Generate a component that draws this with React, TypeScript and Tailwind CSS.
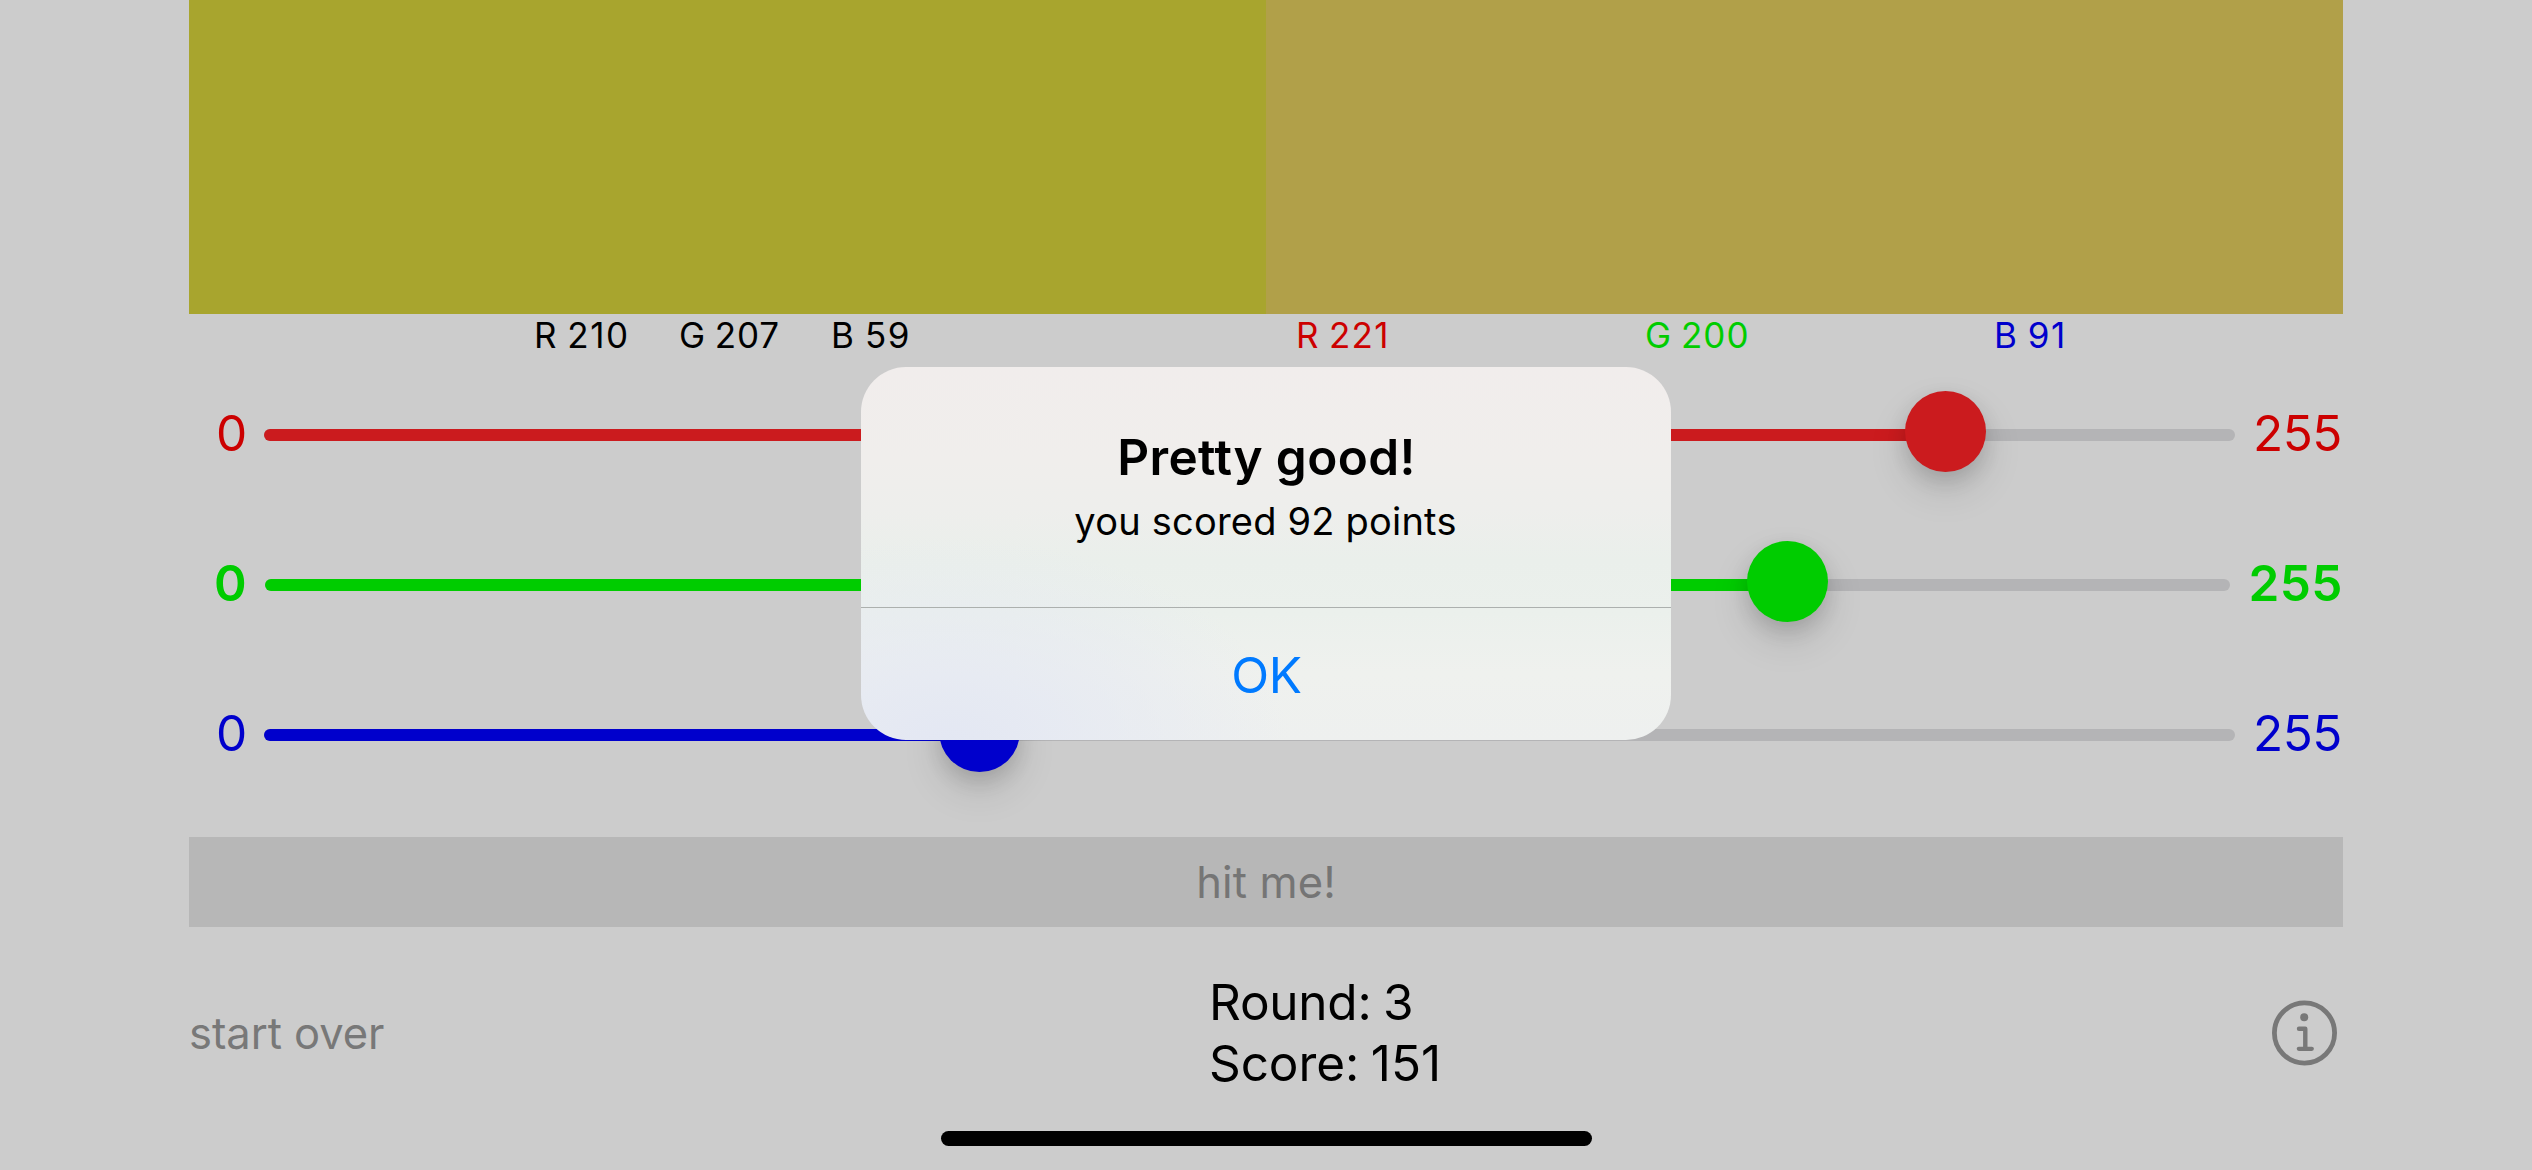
type SliderProps = {
  row: string;
  zero: string;
  track: string;
  fill: string;
  knob: string;
  max: string;
};

function ColorSlider({ row, zero, track, fill, knob, max }: SliderProps) {
  return (
    <div className={`flex h-[150px] items-center text-[49.5px] leading-[60px] ${row}`}>
      <span className={zero}>0</span>
      <div className={`relative mt-1 h-3 shrink-0 rounded-full bg-[#b4b4b6] ${track}`}>
        <div className={`h-3 rounded-full ${fill}`} />
        <div
          className={`absolute -top-[38px] size-[81px] rounded-full shadow-[0_18px_39px_rgba(0,0,0,0.13),0_8px_20px_rgba(0,0,0,0.12)] ${knob}`}
        />
      </div>
      <span className={max}>255</span>
    </div>
  );
}

function InfoIcon() {
  return (
    <svg
      viewBox="0 0 66 66"
      className="ml-auto mr-[5px] size-[66px]"
      fill="none"
      stroke="#787878"
      strokeLinecap="round"
      strokeLinejoin="round"
    >
      <circle cx="32.5" cy="33" r="30.1" strokeWidth="4.8" />
      <circle cx="32.2" cy="17.3" r="4" fill="#787878" stroke="none" />
      <path d="M27 28.8h6.3v20" strokeWidth="4.4" />
      <path d="M26.8 48.8h13" strokeWidth="4.2" />
    </svg>
  );
}

function Alert() {
  return (
    <div className="absolute left-[861px] top-[367px] flex h-[373px] w-[810px] flex-col overflow-hidden rounded-[45px] bg-[radial-gradient(ellipse_340px_210px_at_11%_102%,#e3e7f3_0%,rgba(229,233,243,0.8)_35%,rgba(233,237,240,0)_100%),linear-gradient(180deg,#f1edec_0%,#f0eeec_25%,#eeeeec_38%,#eaefeb_52%,#ebf0ec_66%,#eff1ee_82%,#eef0ef_100%)]">
      <div className="flex h-60 flex-col items-center pt-[60px]">
        <h1 className="pl-px text-[49.5px] font-semibold leading-[60px] tracking-[0.4px]">Pretty good!</h1>
        <p className="mt-[10px] pr-px text-[38px] leading-[48px] tracking-[0.21px]">you scored 92 points</p>
      </div>
      <div className="h-px bg-[#acb0ae]" />
      <button className="flex grow items-center justify-center pt-[2px] pl-px text-[49.5px] leading-[60px] tracking-[-0.35px] text-[#007aff]">
        OK
      </button>
    </div>
  );
}

export default function App() {
  return (
    <div className="relative flex h-[1170px] w-[2532px] flex-col overflow-hidden bg-[#cccccc] px-[189px] font-['Inter',sans-serif] text-black">
      <div className="flex h-[314px]">
        <div className="flex-1 bg-[#a8a52e]" />
        <div className="flex-1 bg-[#b1a049]" />
      </div>

      <div className="mb-px flex h-[43px] items-center whitespace-nowrap text-[35px] leading-[43px] [word-spacing:-2px]">
        <div className="flex w-[1077px] pl-[345px]">
          <span className="w-[145px] tracking-[1.5px]">R 210</span>
          <span className="w-[152px] tracking-[0.9px]">G 207</span>
          <span className="tracking-[1.6px]">B 59</span>
        </div>
        <div className="flex flex-1 pl-[30px]">
          <span className="w-[349px] tracking-[1.3px] text-[#cc0000]">R 221</span>
          <span className="w-[349px] tracking-[1px] text-[#00cc00]">G 200</span>
          <span className="tracking-[1.5px] text-[#0000cc]">B 91</span>
        </div>
      </div>

      <ColorSlider
        row="pl-[27px] text-[#cc0000]"
        zero="w-12"
        track="w-[1971px]"
        fill="w-[1681px] bg-[#cb1b1e]"
        knob="left-[1641px] bg-[#cb1b1e]"
        max="ml-[18px] tracking-[-0.5px]"
      />
      <ColorSlider
        row="pl-[25px] font-semibold text-[#00cc00]"
        zero="w-[51px]"
        track="w-[1965px]"
        fill="w-[1522px] bg-[#00cc00]"
        knob="left-[1482px] bg-[#00cc00]"
        max="ml-[18.5px] tracking-[0.5px]"
      />
      <ColorSlider
        row="pl-[27px] text-[#0000cc]"
        zero="w-12"
        track="w-[1971px]"
        fill="w-[716px] bg-[#0000cc]"
        knob="left-[675px] bg-[#0000cc]"
        max="ml-[18px] tracking-[-0.5px]"
      />

      <button className="mt-[29px] flex h-[90px] items-center justify-center bg-[#b7b7b7] text-[43.5px] leading-[54px] tracking-[0.14px] text-[#757575]">
        hit me!
      </button>

      <div className="mt-[44px] flex h-[123px] items-center">
        <button className="w-[1020px] text-left text-[43.5px] leading-[54px] tracking-[-0.06px] text-[#787878]">
          start over
        </button>
        <div className="flex flex-col text-[49.5px] leading-[61px] [word-spacing:-2px]">
          <span className="tracking-[-0.25px]">Round: 3</span>
          <span className="tracking-[-0.1px]">Score: 151</span>
        </div>
        <InfoIcon />
      </div>

      <div className="mt-[37px] h-[15px] w-[651px] self-center rounded-full bg-black" />
      <Alert />
    </div>
  );
}
